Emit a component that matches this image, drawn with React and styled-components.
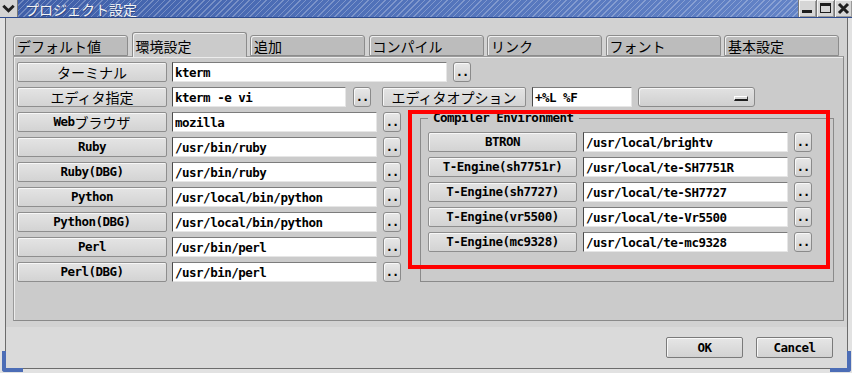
import React from "react"
import styled, { createGlobalStyle } from "styled-components"

const mono = `"DejaVu Sans Mono", "Noto Sans CJK JP", monospace`
const jp = `"Noto Sans CJK JP", "Noto Sans CJK SC", sans-serif`

const GlobalStyle = createGlobalStyle`
  html, body {
    margin: 0;
    padding: 0;
    background: #ffffff;
  }
  * {
    box-sizing: border-box;
  }
`

const tabs = ["デフォルト値", "環境設定", "追加", "コンパイル", "リンク", "フォント", "基本設定"]

const toolRows = [
  [<>Web<Jp>ブラウザ</Jp></>, "mozilla"],
  ["Ruby", "/usr/bin/ruby"],
  ["Ruby(DBG)", "/usr/bin/ruby"],
  ["Python", "/usr/local/bin/python"],
  ["Python(DBG)", "/usr/local/bin/python"],
  ["Perl", "/usr/bin/perl"],
  ["Perl(DBG)", "/usr/bin/perl"],
]

const compilerRows = [
  ["BTRON", "/usr/local/brightv"],
  ["T-Engine(sh7751r)", "/usr/local/te-SH7751R"],
  ["T-Engine(sh7727)", "/usr/local/te-SH7727"],
  ["T-Engine(vr5500)", "/usr/local/te-Vr5500"],
  ["T-Engine(mc9328)", "/usr/local/te-mc9328"],
]

function Jp({ children }) {
  return <JpText>{children}</JpText>
}

const App = () => {
  return (
    <>
      <GlobalStyle />
      <Window>
        <TitleBar>
          <MenuButton>
            <svg width="18" height="17" viewBox="0 0 18 17">
              <path d="M3.5 5.5 L9 11 L14.5 5.5" fill="none" stroke="#1e1e1e" strokeWidth="3" />
            </svg>
          </MenuButton>
          <Title>プロジェクト設定</Title>
          <WinButtons>
            <WinButton>
              <svg width="17" height="17" viewBox="0 0 17 17">
                <rect x="3" y="10" width="10" height="3" fill="#1e1e1e" />
              </svg>
            </WinButton>
            <WinButton>
              <svg width="17" height="17" viewBox="0 0 17 17">
                <rect x="3.5" y="3.5" width="10" height="9" fill="none" stroke="#1e1e1e" strokeWidth="1" />
                <rect x="3" y="3" width="11" height="3" fill="#1e1e1e" />
              </svg>
            </WinButton>
            <WinButton>
              <svg width="17" height="17" viewBox="0 0 17 17">
                <path d="M4 4 L13 13 M13 4 L4 13" stroke="#1e1e1e" strokeWidth="3" />
              </svg>
            </WinButton>
          </WinButtons>
        </TitleBar>

        <Body>
          <Notebook>
            <TabRow>
              {tabs.map((t, i) => (
                <Tab key={t} $active={i === 1}>
                  {t}
                </Tab>
              ))}
            </TabRow>
            <Panel>
              <Row>
                <LabelButton>
                  <Jp>ターミナル</Jp>
                </LabelButton>
                <Field $w={275} defaultValue="kterm" spellCheck={false} />
                <Dots>..</Dots>
              </Row>
              <Row>
                <LabelButton>
                  <Jp>エディタ指定</Jp>
                </LabelButton>
                <Field $w={174} defaultValue="kterm -e vi" spellCheck={false} />
                <Dots $ml={2}>..</Dots>
                <LabelButton $w={144} $ml={6}>
                  <Jp>エディタオプション</Jp>
                </LabelButton>
                <Field $w={100} $ml={1} defaultValue="+%L %F" spellCheck={false} />
                <OptionMenu>
                  <OptionMark />
                </OptionMenu>
              </Row>
              <Split>
                <Column>
                  {toolRows.map(([label, path], i) => (
                    <Row key={i}>
                      <LabelButton>{label}</LabelButton>
                      <Field $w={205} defaultValue={path} spellCheck={false} />
                      <Dots>..</Dots>
                    </Row>
                  ))}
                </Column>
                <Group>
                  <Legend>Compiler Environment</Legend>
                  <Column>
                    {compilerRows.map(([label, path]) => (
                      <Row key={label}>
                        <LabelButton $w={149}>{label}</LabelButton>
                        <Field $w={205} $ml={1} defaultValue={path} spellCheck={false} />
                        <Dots>..</Dots>
                      </Row>
                    ))}
                  </Column>
                </Group>
              </Split>
            </Panel>
          </Notebook>
          <ButtonBar>
            <DialogButton>OK</DialogButton>
            <DialogButton>Cancel</DialogButton>
          </ButtonBar>
        </Body>

        <Corner $side="left" />
        <Corner $side="right" />
        <Highlight />
      </Window>
    </>
  )
}
export default App

const Window = styled.div`
  position: relative;
  width: 852px;
  height: 373px;
  display: flex;
  flex-direction: column;
  background: #e2e2e2;
  overflow: hidden;
  font-family: ${mono};
  color: #000;
`

const TitleBar = styled.div`
  height: 18px;
  display: flex;
  align-items: stretch;
  border-bottom: 1px solid #2d4b8e;
  background:
    repeating-linear-gradient(135deg, rgba(255, 255, 255, 0.26) 0 1px, transparent 1px 4px),
    linear-gradient(90deg, #3e5ea8 0%, #4f70b8 40%, #6585c8 100%);
`

const MenuButton = styled.div`
  width: 18px;
  background: #d4d4d4;
  border-right: 1px solid #777;
  display: flex;
  align-items: center;
  justify-content: center;
`

const Title = styled.div`
  flex: 1;
  display: flex;
  align-items: center;
  padding-left: 7px;
  font-family: ${jp};
  font-size: 14px;
  line-height: 16px;
  color: #f4f4f4;
  text-shadow: 1px 1px 0 rgba(30, 50, 100, 0.5);
`

const WinButtons = styled.div`
  display: flex;
  gap: 1px;
  background: #7a7a7a;
  padding-left: 1px;
`

const WinButton = styled.div`
  width: 17px;
  background: #d6d6d6;
  box-shadow: inset 1px 1px 0 #f2f2f2, inset -1px -1px 0 #9a9a9a;
  display: flex;
  align-items: center;
  justify-content: center;
`

const Body = styled.div`
  flex: 1;
  display: flex;
  flex-direction: column;
  margin: 0 4px 4px 5px;
  border: 1px solid #6c6c6c;
  border-top: none;
`

const Notebook = styled.div`
  background: #d2d2d2;
  padding: 14px 3px 6px 7px;
`

const TabRow = styled.div`
  position: relative;
  z-index: 1;
  height: 24px;
  display: flex;
  align-items: flex-end;
  gap: 3.5px;
`

const Tab = styled.div`
  width: 115px;
  height: ${(p) => (p.$active ? "25px" : "21px")};
  margin-bottom: ${(p) => (p.$active ? "-1px" : "0")};
  padding: ${(p) => (p.$active ? "1px 0 0 3px" : "0 0 0 3px")};
  background: ${(p) => (p.$active ? "#cbcbcb" : "#bcbcbc")};
  border: 1px solid #8c8c8c;
  border-bottom: ${(p) => (p.$active ? "none" : "1px solid #8c8c8c")};
  border-radius: 3px 3px 0 0;
  box-shadow: inset 1px 1px 0 #f0f0f0;
  font-family: ${jp};
  font-size: 14px;
  line-height: 18px;
  display: flex;
  align-items: center;
`

const Panel = styled.div`
  height: 265px;
  background: #cbcbcb;
  border: 1px solid;
  border-color: #9a9a9a #8a8a8a #8a8a8a #9a9a9a;
  box-shadow: inset 1px 1px 0 #ececec;
  padding: 5px 9px 0 3px;
  display: flex;
  flex-direction: column;
  gap: 5px;
`

const Row = styled.div`
  height: 20px;
  display: flex;
  align-items: center;
  gap: 5px;
`

const Split = styled.div`
  display: flex;
  align-items: flex-start;
  gap: 19px;
`

const Column = styled.div`
  display: flex;
  flex-direction: column;
  gap: 5px;
`

const JpText = styled.span`
  font-family: ${jp};
  font-size: 14px;
  font-weight: 400;
  letter-spacing: 0;
`

const LabelButton = styled.div`
  flex: none;
  width: ${(p) => p.$w || 150}px;
  height: 20px;
  margin-left: ${(p) => p.$ml || 0}px;
  background: linear-gradient(#e4e4e4, #d3d3d3);
  border: 1px solid #8e8e8e;
  border-radius: 2px;
  box-shadow: inset 1px 1px 0 #f7f7f7;
  display: flex;
  align-items: center;
  justify-content: center;
  font-family: ${mono};
  font-size: 12.5px;
  font-weight: 700;
  letter-spacing: -0.5px;
  line-height: 18px;
  white-space: nowrap;
`

const Field = styled.input`
  flex: none;
  width: ${(p) => p.$w}px;
  height: 20px;
  margin: 0 0 0 ${(p) => p.$ml || 0}px;
  padding: 0 2px;
  background: #ffffff;
  border: 1px solid;
  border-color: #7c7c7c #e6e6e6 #e6e6e6 #4a4a4a;
  outline: none;
  font-family: ${mono};
  font-size: 12.5px;
  font-weight: 700;
  letter-spacing: -0.5px;
  color: #000;
`

const Dots = styled.div`
  flex: none;
  width: 18px;
  height: 20px;
  margin-left: ${(p) => (p.$ml === undefined ? 1 : p.$ml)}px;
  background: linear-gradient(#e8e8e8, #d0d0d0);
  border: 1px solid #8a8a8a;
  border-radius: 3px;
  box-shadow: inset 1px 1px 0 #f8f8f8;
  font-size: 12px;
  font-weight: 700;
  line-height: 12px;
  display: flex;
  align-items: flex-end;
  justify-content: center;
  padding-bottom: 3px;
  letter-spacing: -1px;
`

const OptionMenu = styled.div`
  flex: none;
  width: 117px;
  height: 20px;
  margin-left: 1px;
  background: linear-gradient(#e2e2e2, #cfcfcf);
  border: 1px solid #8a8a8a;
  border-radius: 3px;
  box-shadow: inset 1px 1px 0 #f6f6f6;
  display: flex;
  align-items: center;
  justify-content: flex-end;
  padding: 2px 6px 0 0;
`

const OptionMark = styled.span`
  width: 14px;
  height: 5px;
  background: #d8d8d8;
  border-top: 1px solid #ffffff;
  border-left: 1px solid #ffffff;
  border-right: 1px solid #3a3a3a;
  border-bottom: 2px solid #1e1e1e;
`

const Group = styled.fieldset`
  flex: 1;
  min-width: 0;
  margin: -1px 0 0 0;
  padding: 7px 7px 29px 7px;
  border: 1px solid #8a8a8a;
`

const Legend = styled.legend`
  padding: 0 5px;
  font-size: 12.5px;
  font-weight: 700;
  letter-spacing: -0.5px;
  line-height: 14px;
`

const ButtonBar = styled.div`
  flex: 1;
  background: #dadada;
  display: flex;
  justify-content: flex-end;
  align-items: flex-start;
  gap: 13px;
  padding: 10px 14px 0 0;
`

const DialogButton = styled.div`
  width: 77px;
  height: 21px;
  background: linear-gradient(#e6e6e6, #d2d2d2);
  border: 1px solid #7a7a7a;
  border-radius: 2px;
  box-shadow: inset 1px 1px 0 #f8f8f8;
  display: flex;
  align-items: center;
  justify-content: center;
  font-size: 12.5px;
  font-weight: 700;
  letter-spacing: -0.5px;
`

const Corner = styled.div`
  position: absolute;
  bottom: 1px;
  ${(p) => (p.$side === "left" ? "left: 2px;" : "right: 1px;")}
  width: 21px;
  height: 21px;
  border-bottom: 4px solid #4c6db6;
  ${(p) =>
    p.$side === "left"
      ? "border-left: 4px solid #4c6db6; border-bottom-left-radius: 3px;"
      : "border-right: 4px solid #4c6db6; border-bottom-right-radius: 3px;"}
`

const Highlight = styled.div`
  position: absolute;
  left: 408px;
  top: 110px;
  width: 422px;
  height: 159px;
  border: 4px solid #ff0000;
  pointer-events: none;
`
